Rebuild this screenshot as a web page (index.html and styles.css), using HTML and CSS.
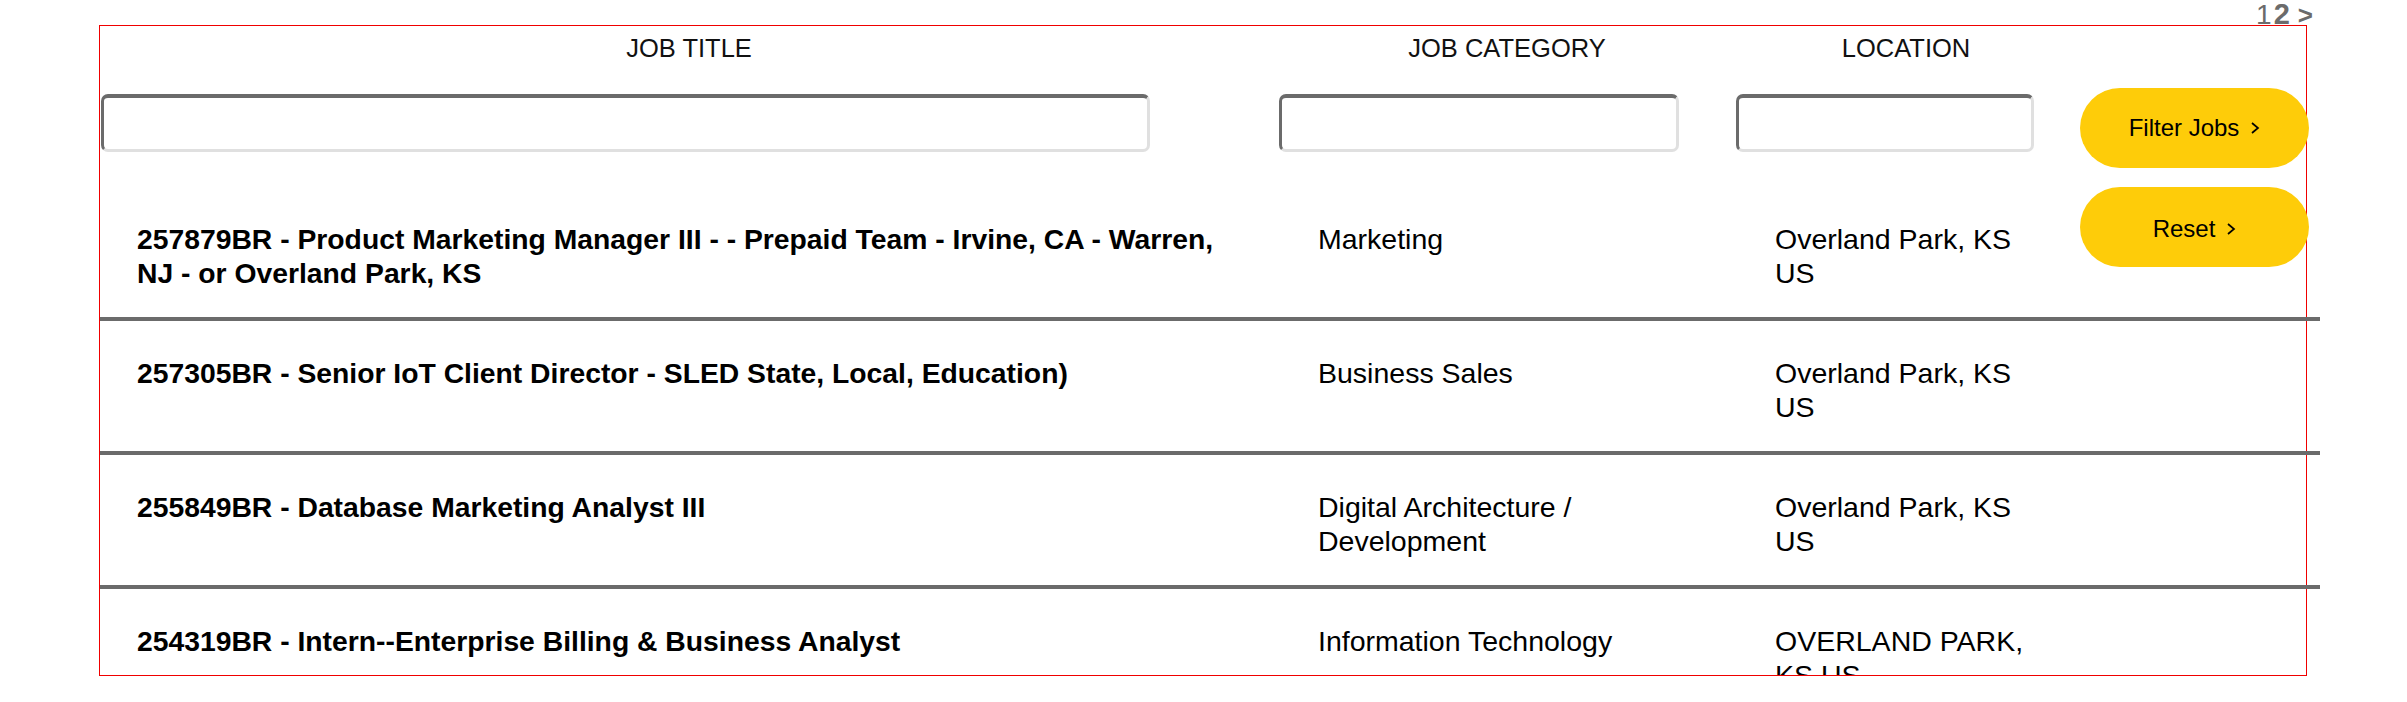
FILE: index.html
```html
<!DOCTYPE html>
<html lang="en">
<head>
<meta charset="utf-8">
<title>Job Search</title>
<link rel="stylesheet" href="styles.css">
</head>
<body>
<div class="page">
  <nav class="pager">
    <span class="pg">1</span><span class="pg pg-current">2</span><span class="pg-next">&gt;</span>
  </nav>
  <div class="board">
    <div class="table">
      <div class="head-row">
        <div class="head-cell">JOB TITLE</div>
        <div class="head-cell">JOB CATEGORY</div>
        <div class="head-cell">LOCATION</div>
        <div class="head-cell"></div>
      </div>
      <div class="filter-row">
        <div class="filter-cell"><input class="field field-title" type="text" aria-label="Job title"></div>
        <div class="filter-cell"><input class="field field-category" type="text" aria-label="Job category"></div>
        <div class="filter-cell"><input class="field field-location" type="text" aria-label="Location"></div>
        <div class="filter-cell">
          <button class="pill" type="button">Filter Jobs <svg class="chev" width="10" height="14" viewBox="0 0 10 14"><polyline points="2,2 8,7 2,12" fill="none" stroke="#000" stroke-width="1.7"/></svg></button>
        </div>
      </div>

      <div class="job-row">
        <div class="cell cell-title">257879BR - Product Marketing Manager III - - Prepaid Team - Irvine, CA - Warren, NJ - or Overland Park, KS</div>
        <div class="cell cell-cat">Marketing</div>
        <div class="cell cell-loc">Overland Park, KS US</div>
        <div class="cell-action">
          <button class="pill pill-reset" type="button">Reset <svg class="chev" width="10" height="14" viewBox="0 0 10 14"><polyline points="2,2 8,7 2,12" fill="none" stroke="#000" stroke-width="1.7"/></svg></button>
        </div>
      </div>
      <div class="job-row">
        <div class="cell cell-title">257305BR - Senior IoT Client Director - SLED State, Local, Education)</div>
        <div class="cell cell-cat">Business Sales</div>
        <div class="cell cell-loc">Overland Park, KS US</div>
        <div class="cell-action"></div>
      </div>
      <div class="job-row">
        <div class="cell cell-title">255849BR - Database Marketing Analyst III</div>
        <div class="cell cell-cat">Digital Architecture / Development</div>
        <div class="cell cell-loc">Overland Park, KS US</div>
        <div class="cell-action"></div>
      </div>
      <div class="job-row">
        <div class="cell cell-title">254319BR - Intern--Enterprise Billing &amp; Business Analyst</div>
        <div class="cell cell-cat">Information Technology</div>
        <div class="cell cell-loc">OVERLAND PARK, KS US</div>
        <div class="cell-action"></div>
      </div>
    </div>
  </div>
</div>
</body>
</html>
```

FILE: styles.css
```css
html, body {
  margin: 0;
  padding: 0;
  background: #ffffff;
}

body {
  font-family: "Liberation Sans", Arial, sans-serif;
  color: #000;
}

.page {
  padding-left: 99px;
}

.pager {
  width: 2214px;
  height: 25px;
  display: flex;
  justify-content: flex-end;
  align-items: baseline;
  font-size: 28px;
  line-height: 28px;
  color: #6b6b6b;
}

.pg {
  font-weight: 400;
}

.pg-current {
  font-weight: 700;
  font-size: 29px;
  margin-left: 2px;
}

.pg-next {
  font-weight: 700;
  margin-left: 8px;
  font-size: 26px;
}

.board {
  width: 2208px;
  height: 651px;
  box-sizing: border-box;
  border: 1px solid #f00000;
  overflow-x: visible;
  overflow-y: clip;
}

.table {
  width: 2220px;
  --cols: 1178px 458px 340px 244px;
}

.head-row,
.filter-row,
.job-row {
  display: grid;
  grid-template-columns: var(--cols);
}

.head-row {
  height: 62px;
  box-sizing: border-box;
  padding-top: 7px;
}

.head-cell {
  text-align: center;
  font-size: 25.5px;
  line-height: 30px;
  color: #111;
}

.filter-row {
  height: 80px;
  margin-bottom: 19px;
}

.filter-cell {
  display: flex;
  align-items: flex-start;
}

.field {
  box-sizing: border-box;
  height: 58px;
  margin-top: 6px;
  margin-left: 1px;
  border-style: solid;
  border-width: 4px 3px 3px 3px;
  border-color: #6b6b6b #e0e0e0 #e0e0e0 #6b6b6b;
  border-radius: 7px;
  background: #fff;
  font: inherit;
  padding: 0 12px;
}

.field-title { width: 1049px; }
.field-category { width: 400px; }
.field-location { width: 298px; margin-left: 0; }

.pill {
  box-sizing: border-box;
  width: 229px;
  height: 80px;
  margin-left: 4px;
  border: none;
  border-radius: 40px;
  background: #fecc09;
  color: #000;
  font-family: "Liberation Sans", Arial, sans-serif;
  font-size: 24px;
  display: flex;
  align-items: center;
  justify-content: center;
  gap: 11px;
  padding: 0;
  cursor: pointer;
}

.pill-reset {
  padding-top: 3px;
}

.chev {
  display: block;
}

.job-row {
  border-bottom: 4px solid #6b6b6b;
}

.cell {
  padding: 35px 40px 27px 40px;
  font-size: 28.5px;
  line-height: 34px;
}

.cell-title {
  font-weight: 700;
  font-size: 28.3px;
  padding-left: 37px;
  padding-right: 48px;
}

.cell-cat {
  padding-left: 40px;
}

.cell-loc {
  padding-left: 39px;
  padding-right: 50px;
}

.cell-action {
  display: flex;
  align-items: flex-start;
}
```
